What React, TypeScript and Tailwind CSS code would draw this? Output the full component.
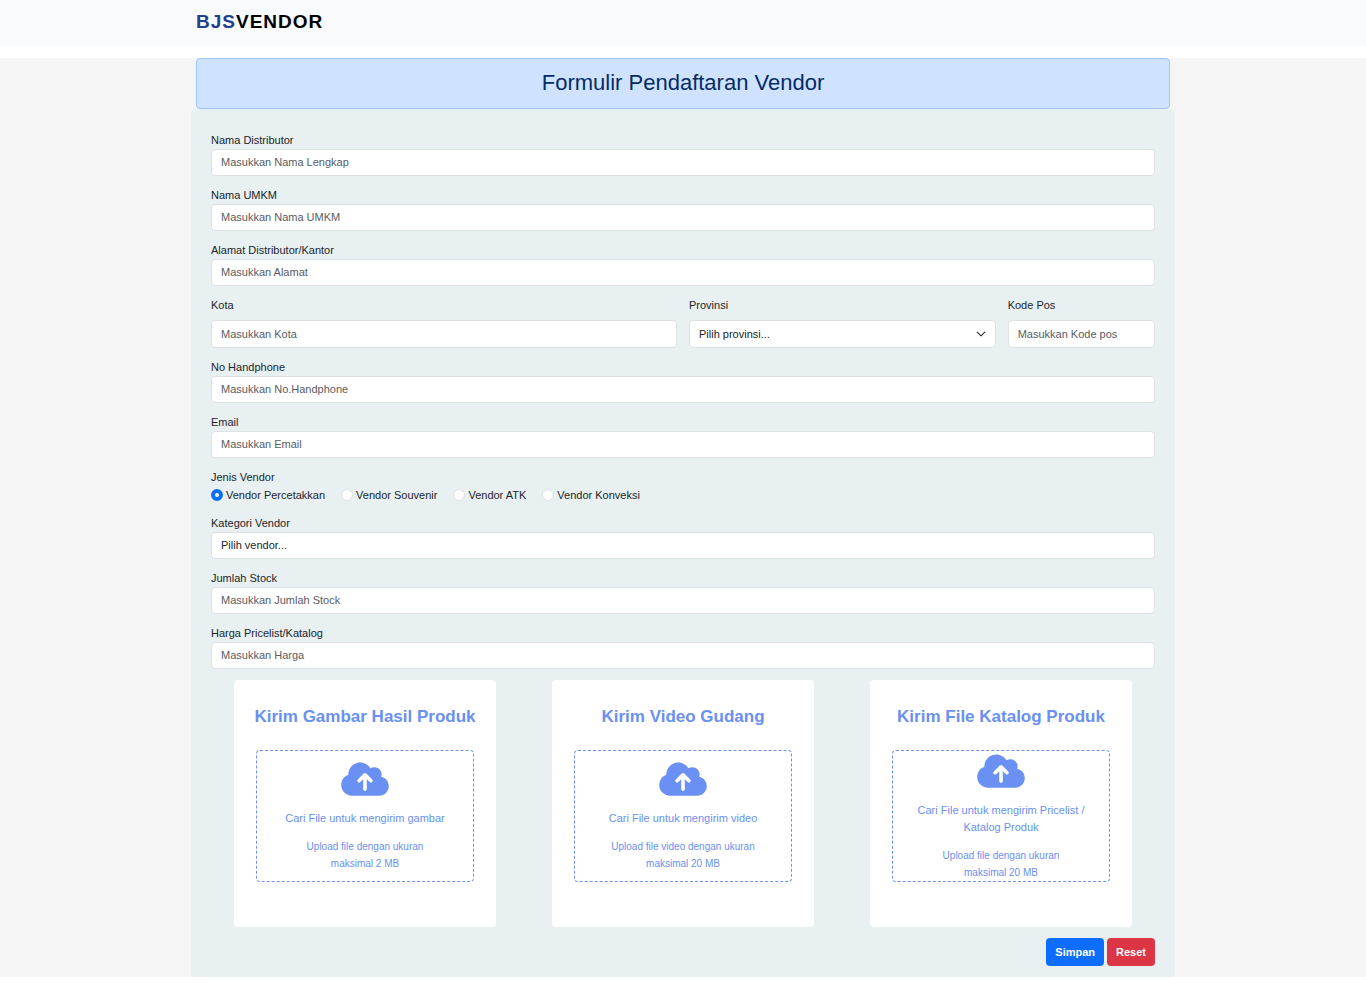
import type { ReactNode } from "react";
import { FaCloudArrowUp } from "react-icons/fa6";

const control =
  "block w-full appearance-none rounded border border-[#dee2e6] bg-white px-[9px] text-[11px] leading-4 text-[#212529] placeholder:text-[#595c5f] placeholder:opacity-100 focus:border-[#86b7fe] focus:outline-none";

function Label({ htmlFor, children }: { htmlFor: string; children: ReactNode }) {
  return (
    <label htmlFor={htmlFor} className="block text-[11px] leading-[17px]">
      {children}
    </label>
  );
}

function TextField({ id, label, placeholder, type = "text" }: { id: string; label: string; placeholder: string; type?: string }) {
  return (
    <div>
      <Label htmlFor={id}>{label}</Label>
      <input id={id} name={id} type={type} placeholder={placeholder} className={`${control} h-[27px] pb-px`} />
    </div>
  );
}

const vendorTypes = ["Vendor Percetakkan", "Vendor Souvenir", "Vendor ATK", "Vendor Konveksi"];

const provinces = ["Banten", "DKI Jakarta", "Jawa Barat", "Jawa Tengah", "Jawa Timur"];

interface Upload {
  id: string;
  title: string;
  prompt: string;
  hint: string;
  limit: string;
  accept?: string;
}

const uploads: Upload[] = [
  {
    id: "gambar",
    title: "Kirim Gambar Hasil Produk",
    prompt: "Cari File untuk mengirim gambar",
    hint: "Upload file dengan ukuran",
    limit: "maksimal 2 MB",
    accept: "image/*",
  },
  {
    id: "video",
    title: "Kirim Video Gudang",
    prompt: "Cari File untuk mengirim video",
    hint: "Upload file video dengan ukuran",
    limit: "maksimal 20 MB",
    accept: "video/*",
  },
  {
    id: "katalog",
    title: "Kirim File Katalog Produk",
    prompt: "Cari File untuk mengirim Pricelist / Katalog Produk",
    hint: "Upload file dengan ukuran",
    limit: "maksimal 20 MB",
  },
];

function UploadCard({ id, title, prompt, hint, limit, accept }: Upload) {
  return (
    <section className="w-full max-w-[262px] justify-self-center rounded bg-white px-[22px] pt-6 pb-[45px] text-center text-[#6990f2]">
      <h2 className="-mx-3 text-[17px] leading-[26px] font-bold">{title}</h2>
      <label
        htmlFor={id}
        className="relative mt-5 flex h-[132px] cursor-pointer flex-col items-center justify-center rounded border border-dashed border-[#6990f2] px-4"
      >
        <input id={id} name={id} type="file" accept={accept} className="sr-only" />
        <FaCloudArrowUp className="h-[38px] w-12 shrink-0" aria-hidden="true" />
        <span className="mt-3 text-[11px] leading-[17px] font-medium">{prompt}</span>
        <span className="mt-[11px] text-[10px] leading-[17px]">
          {hint}
          <br />
          {limit}
        </span>
      </label>
    </section>
  );
}

export default function App() {
  return (
    <div className="bg-white font-['Liberation_Sans',Arial,sans-serif] text-[#212529]">
      <header className="bg-[#f8fafc]">
        <div className="mx-auto max-w-[984px] px-[5px] pt-2 pb-[10px]">
          <a href="#" className="block text-[19px] leading-7 font-bold tracking-[1px] text-black">
            <span className="text-[#23408e]">BJS</span>VENDOR
          </a>
        </div>
      </header>

      <main className="mt-3 bg-[#f5f5f5]">
        <div className="mx-auto max-w-[984px]">
          <h1 className="mx-[5px] rounded border border-[#9ec5fe] bg-[#cfe2ff] pt-[10px] pb-3 text-center text-[22px] leading-[27px] text-[#052c65]">
            Formulir Pendaftaran Vendor
          </h1>

          <form className="flex flex-col gap-[11px] rounded bg-[#e8f0f2] px-5 pt-[23px] pb-[11px]" onSubmit={(e) => e.preventDefault()}>
            <TextField id="distributor" label="Nama Distributor" placeholder="Masukkan Nama Lengkap" />
            <TextField id="umkm" label="Nama UMKM" placeholder="Masukkan Nama UMKM" />
            <TextField id="alamat" label="Alamat Distributor/Kantor" placeholder="Masukkan Alamat" />

            <div className="grid grid-cols-12 gap-3">
              <div className="col-span-6 flex flex-col gap-1.5">
                <Label htmlFor="kota">Kota</Label>
                <input id="kota" name="kota" type="text" placeholder="Masukkan Kota" className={`${control} h-7`} />
              </div>
              <div className="col-span-4 flex flex-col gap-1.5">
                <Label htmlFor="provinsi">Provinsi</Label>
                <div className="relative">
                  <select id="provinsi" name="provinsi" defaultValue="" className={`${control} h-7`}>
                    <option value="">Pilih provinsi...</option>
                    {provinces.map((name) => (
                      <option key={name}>{name}</option>
                    ))}
                  </select>
                  <svg
                    viewBox="0 0 16 16"
                    className="pointer-events-none absolute top-[9px] right-[10px] size-[10px]"
                    fill="none"
                    stroke="#343a40"
                    strokeWidth="2"
                    strokeLinecap="round"
                    strokeLinejoin="round"
                    aria-hidden="true"
                  >
                    <path d="m2 5 6 6 6-6" />
                  </svg>
                </div>
              </div>
              <div className="col-span-2 flex flex-col gap-1.5">
                <Label htmlFor="kodepos">Kode Pos</Label>
                <input id="kodepos" name="kodepos" type="text" placeholder="Masukkan Kode pos" className={`${control} h-7`} />
              </div>
            </div>

            <TextField id="handphone" label="No Handphone" placeholder="Masukkan No.Handphone" type="tel" />
            <TextField id="email" label="Email" placeholder="Masukkan Email" type="email" />

            <fieldset>
              <legend className="text-[11px] leading-[17px]">Jenis Vendor</legend>
              <div className="flex flex-wrap gap-x-4">
                {vendorTypes.map((name, i) => (
                  <label key={name} className="flex items-center gap-[3px] text-[11px] leading-[18px]">
                    <input
                      type="radio"
                      name="jenis"
                      value={name}
                      defaultChecked={i === 0}
                      className="size-3 appearance-none rounded-full border border-[#dee2e6] bg-white checked:border-4 checked:border-[#0d6efd]"
                    />
                    {name}
                  </label>
                ))}
              </div>
            </fieldset>

            <div>
              <Label htmlFor="kategori">Kategori Vendor</Label>
              <select id="kategori" name="kategori" defaultValue="" className={`${control} h-[27px] pb-px`}>
                <option value="">Pilih vendor...</option>
                {vendorTypes.map((name) => (
                  <option key={name}>{name}</option>
                ))}
              </select>
            </div>

            <TextField id="stock" label="Jumlah Stock" placeholder="Masukkan Jumlah Stock" />
            <TextField id="harga" label="Harga Pricelist/Katalog" placeholder="Masukkan Harga" />

            <div className="grid grid-cols-3 gap-[10px]">
              {uploads.map((item) => (
                <UploadCard key={item.id} {...item} />
              ))}
            </div>

            <div className="flex justify-end gap-[3px]">
              <button type="submit" className="h-7 rounded bg-[#0d6efd] px-[9px] text-[11px] font-bold text-white">
                Simpan
              </button>
              <button type="reset" className="h-7 rounded bg-[#dc3545] px-[9px] text-[11px] font-bold text-white">
                Reset
              </button>
            </div>
          </form>
        </div>
      </main>
    </div>
  );
}
